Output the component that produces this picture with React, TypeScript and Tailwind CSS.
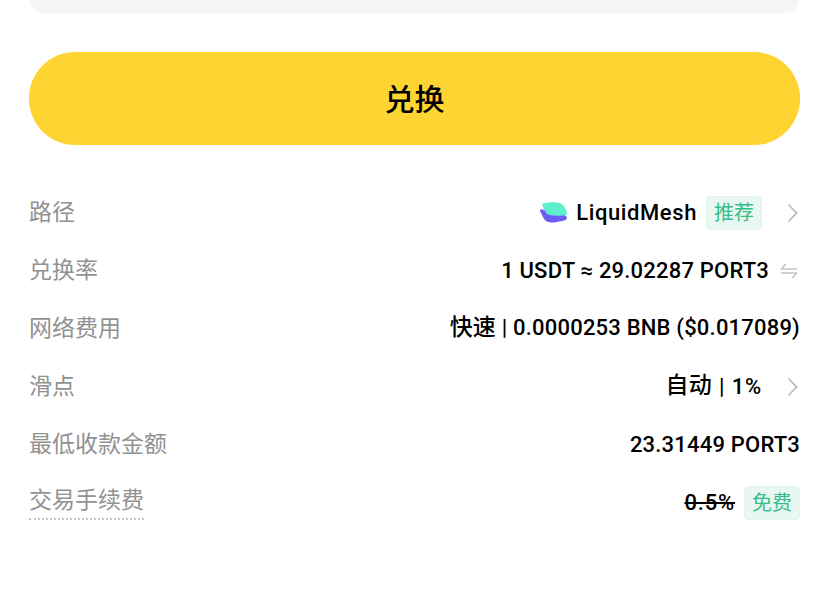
const font = { sans: "font-['Roboto','Noto_Sans_CJK_SC',sans-serif]" }

function Tag({ text }: { text: string }) {
  return (
    <span className="ml-[9px] flex h-[34px] w-[56px] items-center justify-center rounded-[4px] border border-[#e3f4ee] bg-[#e9f7f2] text-[20px] font-normal tracking-normal text-[#35bd8a]">
      {text}
    </span>
  )
}

function Row({ label, children, dotted }: { label: string; children: React.ReactNode; dotted?: boolean }) {
  return (
    <div className="flex h-[58px] items-center justify-between">
      <span className={dotted ? 'border-b-2 border-dotted border-[#c4c4c4] text-[23px] leading-[34px] text-[#929292]' : 'mt-px text-[23px] leading-[34px] text-[#929292]'}>
        {label}
      </span>
      <div className="mt-px flex items-center text-[22px] font-medium tracking-[0.2px] text-black">{children}</div>
    </div>
  )
}

function Arrow() {
  return (
    <svg className="ml-[25px] mr-[2px] h-[20px] w-[11px] text-[#b9b9b9]" viewBox="0 0 11 20" fill="none" stroke="currentColor" strokeWidth="1.7">
      <path d="M1.5 1.5 L9.5 10 L1.5 18.5" />
    </svg>
  )
}

function Logo() {
  return (
    <svg className="mr-[7px] h-[24px] w-[30px]" viewBox="0 0 30 24">
      <path d="M1 10 C1 8 3 8 5 9 L22 13 C26 14 28 15 28 17 C28 19 24 20 18 21 C12 22 8 22 5 18 Z" fill="#6a5cf5" />
      <path d="M3 3 C8 1 16 1 21 2 C25 4 28 9 28 14 C20 15 12 15 8 13 C6 10 4 7 3 3 Z" fill="#5eeecb" />
    </svg>
  )
}

export default function App() {
  return (
    <div className={`h-[599px] w-[829px] overflow-hidden bg-white px-[29px] ${font.sans}`}>
      <div className="mx-px h-[13px] rounded-b-[18px] bg-[#f5f5f5]" />
      <button className="mt-[39px] flex h-[93px] w-full items-center justify-center rounded-[46px] bg-[#fdd431] pt-px text-[30px] font-medium text-black">
        兑换
      </button>
      <div className="mt-[38px]">
        <Row label="路径">
          <Logo />
          <span className="tracking-[0.6px]">LiquidMesh</span>
          <Tag text="推荐" />
          <Arrow />
        </Row>
        <Row label="兑换率">
          <span>1 USDT ≈ 29.02287 PORT3</span>
          <svg className="ml-[10px] mr-px h-[20px] w-[20px] text-[#c4c4c4]" viewBox="0 0 20 20" fill="none" stroke="currentColor" strokeWidth="1.5">
            <path d="M2 8 H18 M2 8 L7 3" />
            <path d="M18 12 H2 M18 12 L13 17" />
          </svg>
        </Row>
        <Row label="网络费用">
          <span><span className="text-[23px]">快速</span> | 0.0000253 BNB ($0.017089)</span>
        </Row>
        <Row label="滑点">
          <span className="flex items-center">
            <span className="text-[23px]">自动</span>
            <span className="mx-[7px]">|</span>
            <span className="tracking-[0.8px]">1%</span>
          </span>
          <Arrow />
        </Row>
        <Row label="最低收款金额">
          <span>23.31449 PORT3</span>
        </Row>
        <Row label="交易手续费" dotted>
          <span className="tracking-[0.8px] line-through">0.5%</span>
          <Tag text="免费" />
        </Row>
      </div>
    </div>
  )
}
